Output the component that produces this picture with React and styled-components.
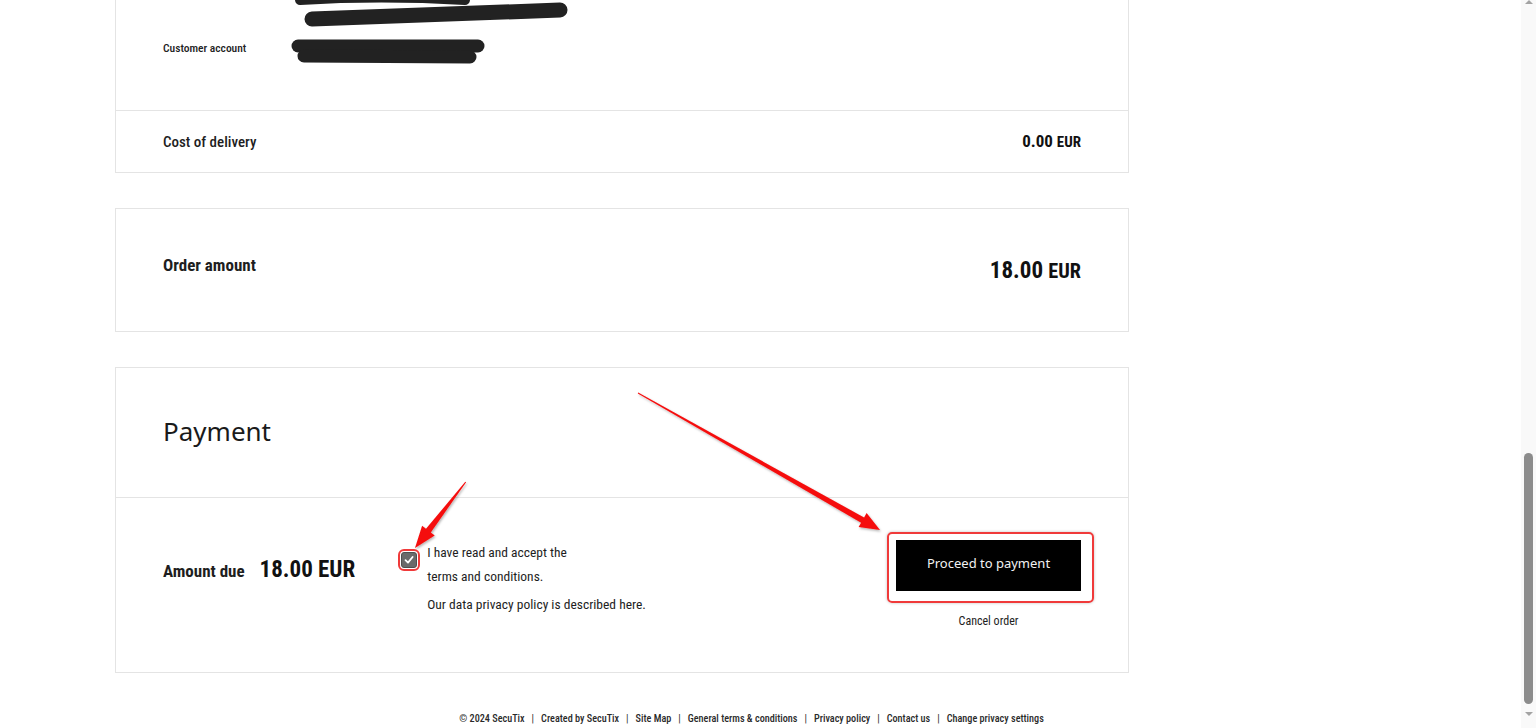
import React from "react";
import styled, { createGlobalStyle } from "styled-components";

const narrow = `"Roboto Condensed", Roboto, "Liberation Sans", sans-serif`;
const sans = `"Noto Sans", "Open Sans", sans-serif`;

const GlobalStyle = createGlobalStyle`
  html, body {
    margin: 0;
    padding: 0;
    height: 100%;
    overflow: hidden;
    background: #fff;
  }
  body {
    font-family: ${narrow};
    font-stretch: 75%;
    color: #1e1e1e;
  }
  * { box-sizing: border-box; }
`;

const Screen = styled.div`
  position: relative;
  display: flex;
  width: 1536px;
  height: 728px;
  overflow: hidden;
`;

const Page = styled.main`
  flex: 1;
  min-width: 0;
  display: flex;
  flex-direction: column;
`;

const Column = styled.div`
  width: 1014px;
  margin-left: 115px;
  display: flex;
  flex-direction: column;
  gap: 35px;
`;

const Card = styled.section`
  background: #fff;
  border: 1px solid #e4e4e4;
  ${(p) => p.$clipped && "border-top: none;"}
`;

const Details = styled.div`
  height: 111px;
  padding: 0 47px;
  border-bottom: 1px solid #e4e4e4;
  display: grid;
  grid-template-columns: 127px 1fr;
  grid-template-rows: 28px 40px;
  align-items: center;
`;

const DetailLabel = styled.span`
  font-size: 11.5px;
  font-weight: 500;
  color: #222;
`;

const Redacted = styled.svg`
  display: block;
  margin-top: ${(p) => p.$shift || 0}px;
`;

const SummaryRow = styled.div`
  height: ${(p) => p.$h}px;
  padding: ${(p) => p.$top || 0}px 47px 0;
  display: flex;
  justify-content: space-between;
  align-items: ${(p) => (p.$top ? "flex-start" : "center")};
`;

const RowLabel = styled.span`
  font-size: ${(p) => p.$size}px;
  line-height: ${(p) => p.$lh || 22}px;
  font-weight: ${(p) => p.$weight || 500};
  color: #1e1e1e;
`;

const Price = styled.span`
  font-size: ${(p) => p.$size}px;
  line-height: ${(p) => p.$lh || 24}px;
  font-weight: 700;
  color: #111;
  white-space: nowrap;

  & small {
    font-size: 0.88em;
  }
`;

const PaymentHead = styled.div`
  height: 130px;
  padding: 0 47px 4px;
  border-bottom: 1px solid #e4e4e4;
  display: flex;
  align-items: center;
`;

const Heading = styled.h2`
  margin: 0;
  font-family: ${sans};
  font-stretch: normal;
  font-size: 26px;
  font-weight: 400;
  color: #1a1a1a;
`;

const PaymentBody = styled.div`
  height: 174px;
  padding: 42px 47px 0;
  display: flex;
  align-items: flex-start;
`;

const AmountDue = styled.div`
  margin-top: 15px;
  display: flex;
  align-items: baseline;
  gap: 15px;
  line-height: 30px;
`;

const Terms = styled.div`
  margin-left: 46px;
  display: flex;
  align-items: flex-start;
  gap: 10px;
`;

const Checkbox = styled.span`
  flex: none;
  width: 16px;
  height: 16px;
  margin-top: 12px;
  border-radius: 3px;
  background: #6a6a6a;
  border: 1px solid #4f4f4f;
  display: flex;
  align-items: center;
  justify-content: center;
  outline: 2px solid #f03a3a;
  outline-offset: 1px;
`;

const TermsText = styled.div`
  font-size: 13.5px;
  line-height: 24px;
  color: #1e1e1e;

  & p {
    margin: 4px 0 0;
  }
`;

const Actions = styled.div`
  margin-left: auto;
  display: flex;
  flex-direction: column;
  align-items: center;
`;

const PayButton = styled.button`
  position: relative;
  width: 185px;
  height: 51px;
  padding: 0 0 6px;
  border: none;
  background: #000;
  color: #f2f2f2;
  font-family: ${sans};
  font-stretch: normal;
  font-size: 13px;
  cursor: pointer;

  &::after {
    content: "";
    position: absolute;
    top: -8px;
    left: -9px;
    right: -13px;
    bottom: -12px;
    border: 2px solid #f03a3a;
    border-radius: 5px;
    box-shadow: 0 0 3px rgba(0, 0, 0, 0.25);
    pointer-events: none;
  }
`;

const CancelLink = styled.a`
  margin-top: 22px;
  font-size: 12px;
  line-height: 16px;
  color: #1e1e1e;
  text-decoration: none;
`;

const Footer = styled.footer`
  margin-top: 39px;
  padding-right: 18px;
  text-align: center;
  font-size: 10.2px;
  line-height: 14px;
  font-weight: 500;
  color: #2a2a2a;
  white-space: nowrap;
`;

const Sep = styled.span`
  margin: 0 7px;
  font-weight: 400;
`;

const Scrollbar = styled.div`
  flex: none;
  width: 15px;
  background: #f9f9f9;
  display: flex;
  flex-direction: column;
  align-items: center;
`;

const Arrow = styled.span`
  width: 0;
  height: 0;
  border-left: 4px solid transparent;
  border-right: 4px solid transparent;
  ${(p) =>
    p.$up
      ? "border-bottom: 4px solid #a3a3a3; margin-top: 0;"
      : "border-top: 4px solid #a3a3a3; margin: 8px 0 12px;"}
`;

const Thumb = styled.div`
  margin-top: auto;
  width: 9px;
  height: 251px;
  border-radius: 5px;
  background: #8c8c8c;
`;

const Overlay = styled.svg`
  position: absolute;
  inset: 0;
  pointer-events: none;
`;

const footerLinks = [
  "© 2024 SecuTix",
  "Created by SecuTix",
  "Site Map",
  "General terms & conditions",
  "Privacy policy",
  "Contact us",
  "Change privacy settings",
];

function Annotations() {
  return (
    <Overlay width="1536" height="728" viewBox="0 0 1536 728">
      <defs>
        <filter id="shadow" x="-10%" y="-10%" width="120%" height="120%">
          <feDropShadow dx="1" dy="1.5" stdDeviation="1.2" floodColor="#000" floodOpacity="0.3" />
        </filter>
      </defs>
      <g fill="#f50d0d" filter="url(#shadow)">
        <polygon points="637.8,393.4 861.1,522.7 858.6,527.1 880,530 866.6,513.1 864.1,517.5 638.2,392.6" />
        <polygon points="466.1,482.3 430.8,532.4 434.7,535.5 415,548 422.1,525.7 426,528.8 465.3,481.7" />
      </g>
    </Overlay>
  );
}

export default function App() {
  return (
    <>
      <GlobalStyle />
      <Screen>
        <Page>
          <Column>
            <Card $clipped>
              <Details>
                <span />
                <Redacted width="285" height="28" viewBox="0 0 285 28" $shift={-2}>
                  <g stroke="#222" strokeLinecap="round" fill="none">
                    <path d="M10 1 Q 90 -4 175 1" strokeWidth="10" />
                    <path d="M22 20 L 270 11" strokeWidth="15" />
                  </g>
                </Redacted>
                <DetailLabel>Customer account</DetailLabel>
                <Redacted width="200" height="26" viewBox="0 0 200 26" $shift={8}>
                  <g stroke="#222" strokeLinecap="round" fill="none">
                    <path d="M8 7 L 188 7" strokeWidth="13" />
                    <path d="M14 17 L 180 18" strokeWidth="13" />
                  </g>
                </Redacted>
              </Details>
              <SummaryRow $h={61}>
                <RowLabel $size={15}>Cost of delivery</RowLabel>
                <Price $size={17}>
                  0.00 <small>EUR</small>
                </Price>
              </SummaryRow>
            </Card>

            <Card>
              <SummaryRow $h={122} $top={45}>
                <RowLabel $size={17} $weight={700}>Order amount</RowLabel>
                <Price $size={23} $lh={34}>
                  18.00 <small>EUR</small>
                </Price>
              </SummaryRow>
            </Card>

            <Card>
              <PaymentHead>
                <Heading>Payment</Heading>
              </PaymentHead>
              <PaymentBody>
                <AmountDue>
                  <RowLabel $size={17} $weight={700} $lh={30}>Amount due</RowLabel>
                  <Price $size={23} $lh={30}>18.00 EUR</Price>
                </AmountDue>
                <Terms>
                  <Checkbox>
                    <svg width="10" height="10" viewBox="0 0 10 10">
                      <path d="M1.5 5.2 L4 7.6 L8.6 2" stroke="#fff" strokeWidth="1.8" fill="none" strokeLinecap="round" strokeLinejoin="round" />
                    </svg>
                  </Checkbox>
                  <TermsText>
                    I have read and accept the
                    <br />
                    terms and conditions.
                    <p>Our data privacy policy is described here.</p>
                  </TermsText>
                </Terms>
                <Actions>
                  <PayButton>Proceed to payment</PayButton>
                  <CancelLink href="#">Cancel order</CancelLink>
                </Actions>
              </PaymentBody>
            </Card>
          </Column>
          <Footer>
            {footerLinks.map((l, i) => (
              <React.Fragment key={l}>
                {i > 0 && <Sep>|</Sep>}
                {l}
              </React.Fragment>
            ))}
          </Footer>
        </Page>
        <Scrollbar>
          <Arrow $up />
          <Thumb />
          <Arrow />
        </Scrollbar>
        <Annotations />
      </Screen>
    </>
  );
}
